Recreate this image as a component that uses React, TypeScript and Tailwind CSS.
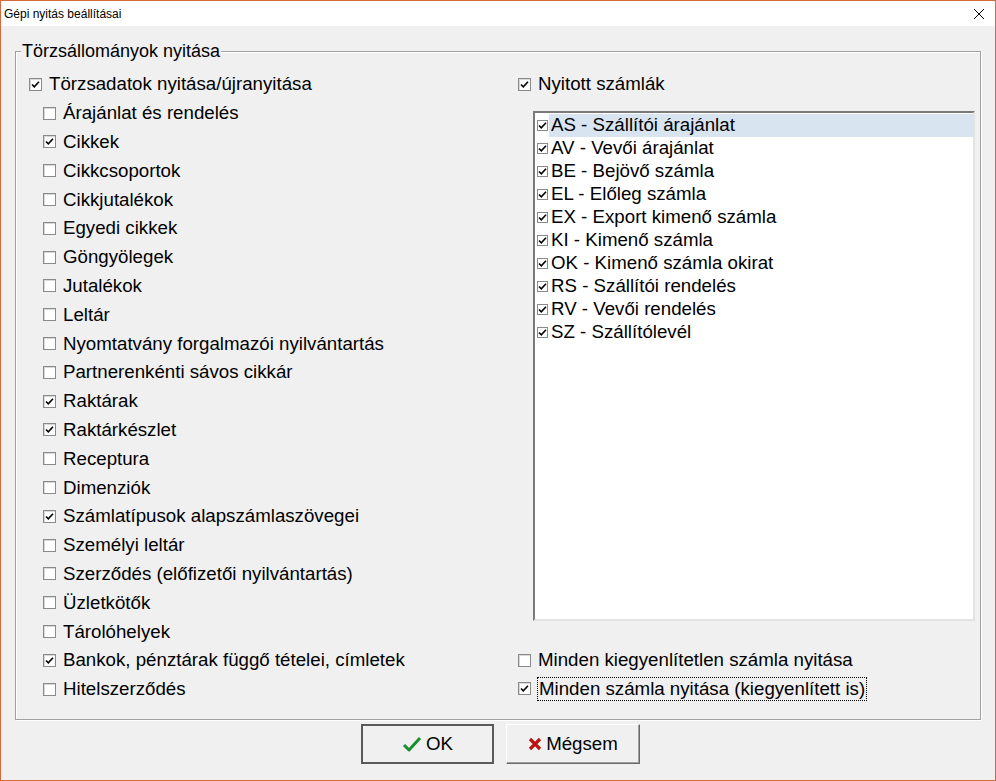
import React from "react";

const leftItems: { label: string; checked: boolean; top?: boolean }[] = [
  { label: "Törzsadatok nyitása/újranyitása", checked: true, top: true },
  { label: "Árajánlat és rendelés", checked: false },
  { label: "Cikkek", checked: true },
  { label: "Cikkcsoportok", checked: false },
  { label: "Cikkjutalékok", checked: false },
  { label: "Egyedi cikkek", checked: false },
  { label: "Göngyölegek", checked: false },
  { label: "Jutalékok", checked: false },
  { label: "Leltár", checked: false },
  { label: "Nyomtatvány forgalmazói nyilvántartás", checked: false },
  { label: "Partnerenkénti sávos cikkár", checked: false },
  { label: "Raktárak", checked: true },
  { label: "Raktárkészlet", checked: true },
  { label: "Receptura", checked: false },
  { label: "Dimenziók", checked: false },
  { label: "Számlatípusok alapszámlaszövegei", checked: true },
  { label: "Személyi leltár", checked: false },
  { label: "Szerződés (előfizetői nyilvántartás)", checked: false },
  { label: "Üzletkötők", checked: false },
  { label: "Tárolóhelyek", checked: false },
  { label: "Bankok, pénztárak függő tételei, címletek", checked: true },
  { label: "Hitelszerződés", checked: false },
];

const invoices = [
  "AS - Szállítói árajánlat",
  "AV - Vevői árajánlat",
  "BE - Bejövő számla",
  "EL - Előleg számla",
  "EX - Export kimenő számla",
  "KI - Kimenő számla",
  "OK - Kimenő számla okirat",
  "RS - Szállítói rendelés",
  "RV - Vevői rendelés",
  "SZ - Szállítólevél",
];

function CheckBox({ checked, small }: { checked: boolean; small?: boolean }) {
  return (
    <span
      className={
        small
          ? "flex h-[11px] w-[11px] shrink-0 items-center justify-center border border-[#8a8a8a] bg-white"
          : "flex h-[13px] w-[13px] shrink-0 items-center justify-center border border-[#8a8a8a] bg-white shadow-[inset_1px_1px_0_#d8d8d8]"
      }
    >
      {checked && (
        <svg width="9" height="9" viewBox="0 0 9 9">
          <path d="M1 4.5 L3.3 6.8 L8 1.8" fill="none" stroke="#000" strokeWidth="1.6" />
        </svg>
      )}
    </span>
  );
}

function Row({ label, checked, focus }: { label: string; checked: boolean; focus?: boolean }) {
  return (
    <div className="flex h-[28.8px] items-center">
      <CheckBox checked={checked} />
      <span
        className={
          focus
            ? "ml-[6px] border border-dotted border-black px-[1px] leading-[22px]"
            : "ml-[7px] leading-[22px]"
        }
      >
        {label}
      </span>
    </div>
  );
}

export default function App() {
  return (
    <div
      className="flex h-[781px] w-[996px] flex-col border border-[#d56a3f] bg-[#f0f0f0] text-black"
      style={{ fontFamily: "Tahoma, 'Liberation Sans', 'DejaVu Sans', sans-serif" }}
    >
      <div className="flex h-[25px] shrink-0 items-center justify-between bg-white pl-[3px] pr-[10px] text-[12px]">
        <span>Gépi nyitás beállításai</span>
        <svg width="12" height="12" viewBox="0 0 12 12">
          <path d="M1 1 L11 11 M11 1 L1 11" stroke="#000" strokeWidth="1" />
        </svg>
      </div>

      <div className="flex flex-1 flex-col px-[14px]">
        <fieldset className="mt-[14px] h-[680px] border border-[#a0a0a0] pl-[13px] pr-[5px] text-[18.7px] shadow-[inset_1px_1px_0_#fff,1px_1px_0_#fff]">
          <legend className="ml-[-8px] bg-[#f0f0f0] px-[1px] text-[18px] leading-[22px]">Törzsállományok nyitása</legend>
          <div className="mt-[8px] flex">
            <div className="w-[489px]">
              {leftItems.map((it) => (
                <div key={it.label} className={it.top ? "" : "pl-[14px]"}>
                  <Row label={it.label} checked={it.checked} />
                </div>
              ))}
            </div>
            <div className="flex flex-1 flex-col">
              <Row label="Nyitott számlák" checked={true} />
              <div className="ml-[15px] mt-[12px] h-[510px] border-2 border-b-[#e3e3e3] border-l-[#7a7a7a] border-r-[#e3e3e3] border-t-[#7a7a7a] bg-white pt-[1px]">
                {invoices.map((inv, i) => (
                  <div key={inv} className="flex h-[23px] items-center pl-[2px]">
                    <CheckBox checked={true} small />
                    <span
                      className={
                        i === 0
                          ? "ml-[1px] flex h-[23px] flex-1 items-center bg-[#d9e4f1] pl-[2px]"
                          : "ml-[1px] pl-[2px]"
                      }
                    >
                      {inv}
                    </span>
                  </div>
                ))}
              </div>
              <div className="mt-[25px]">
                <Row label="Minden kiegyenlítetlen számla nyitása" checked={false} />
                <Row label="Minden számla nyitása (kiegyenlített is)" checked={true} focus />
              </div>
            </div>
          </div>
        </fieldset>

        <div className="mt-[4px] flex justify-center gap-[12px] pl-[5px] text-[18.7px]">
          <button className="flex h-[40px] w-[133px] items-center justify-center gap-[4px] border-2 border-[#5a5a5a] bg-[#f0f0f0]">
            <svg width="20" height="18" viewBox="0 0 20 18">
              <path d="M2 10 L7 15 L18 3" fill="none" stroke="#1a8f2e" strokeWidth="3" strokeLinejoin="round" />
            </svg>
            <span>OK</span>
          </button>
          <button className="flex h-[40px] w-[134px] items-center justify-center gap-[4px] border border-b-[#696969] border-l-[#fff] border-r-[#696969] border-t-[#fff] bg-[#f0f0f0] shadow-[inset_-1px_-1px_0_#a0a0a0]">
            <svg width="14" height="14" viewBox="0 0 14 14">
              <path d="M2 2 L12 12 M12 2 L2 12" stroke="#b81414" strokeWidth="3.2" />
            </svg>
            <span>Mégsem</span>
          </button>
        </div>
      </div>
    </div>
  );
}
